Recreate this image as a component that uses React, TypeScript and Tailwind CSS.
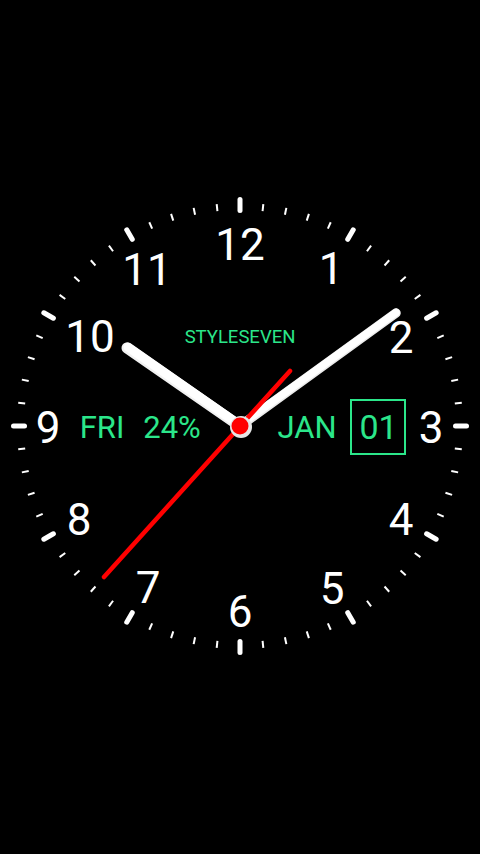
import React from "react";

const CX = 240;
const CY = 426;
const GREEN = "#2be68a";

const numerals: [string, number, number][] = [
  ["12", 240, 244],
  ["1", 331, 268],
  ["2", 401, 337],
  ["3", 431, 427],
  ["4", 401, 519],
  ["5", 332, 588],
  ["6", 240, 611],
  ["7", 148, 587],
  ["8", 79, 519],
  ["9", 48, 427],
  ["10", 90, 336],
  ["11", 147, 269],
];

function Ticks() {
  const items = [];
  for (let i = 0; i < 60; i++) {
    const a = (i * 6 * Math.PI) / 180;
    const s = Math.sin(a);
    const c = -Math.cos(a);
    const hour = i % 5 === 0;
    const r1 = hour ? 215.5 : 216;
    const r2 = hour ? 226.5 : 223;
    items.push(
      <line
        key={i}
        x1={CX + s * r1}
        y1={CY + c * r1}
        x2={CX + s * r2}
        y2={CY + c * r2}
        stroke="#ffffff"
        strokeWidth={hour ? 5 : 2}
        strokeLinecap={hour ? "round" : "butt"}
      />
    );
  }
  return <g>{items}</g>;
}

export default function App() {
  return (
    <div className="w-[480px] h-[854px] bg-black overflow-hidden">
      <svg width="480" height="854" viewBox="0 0 480 854" className="block">
        <Ticks />
        <g fontFamily="Roboto, 'Noto Sans', sans-serif" fill="#ffffff" fontSize="44" textAnchor="middle">
          {numerals.map(([t, x, y]) => (
            <text key={t} x={x} y={y + 15.6}>
              {t}
            </text>
          ))}
        </g>
        <g fontFamily="Roboto, 'Noto Sans', sans-serif" fill={GREEN}>
          <text x="240" y="343" fontSize="18.5" textAnchor="middle">STYLESEVEN</text>
          <text x="102" y="438" fontSize="31" textAnchor="middle">FRI</text>
          <text x="172" y="438" fontSize="31" textAnchor="middle">24%</text>
          <text x="307" y="438" fontSize="31" textAnchor="middle">JAN</text>
          <text x="378.5" y="438.5" fontSize="34" textAnchor="middle">01</text>
        </g>
        <rect x="351" y="400" width="54" height="54" fill="none" stroke={GREEN} strokeWidth="2" />
        {/* hour hand */}
        <line x1={CX + 4} y1={CY + 3} x2="127" y2="348" stroke="#f2f2f2" strokeWidth="11" strokeLinecap="round" />
        <line x1={CX + 4} y1={CY + 2} x2="128" y2="347" stroke="#ffffff" strokeWidth="9" strokeLinecap="round" />
        {/* minute hand */}
        <line x1={CX - 4} y1={CY + 3} x2="396" y2="313" stroke="#ececec" strokeWidth="9.5" strokeLinecap="round" />
        <line x1={CX - 4} y1={CY + 2} x2="396" y2="312.5" stroke="#ffffff" strokeWidth="7.5" strokeLinecap="round" />
        {/* second hand */}
        <line x1="290" y1="371" x2="104" y2="577" stroke="#ff0000" strokeWidth="4.5" strokeLinecap="round" />
        <circle cx={CX + 1} cy={CY + 1} r="11" fill="#e6e6e6" />
        <circle cx={CX} cy={CY} r="8.5" fill="#ff0000" />
      </svg>
    </div>
  );
}
